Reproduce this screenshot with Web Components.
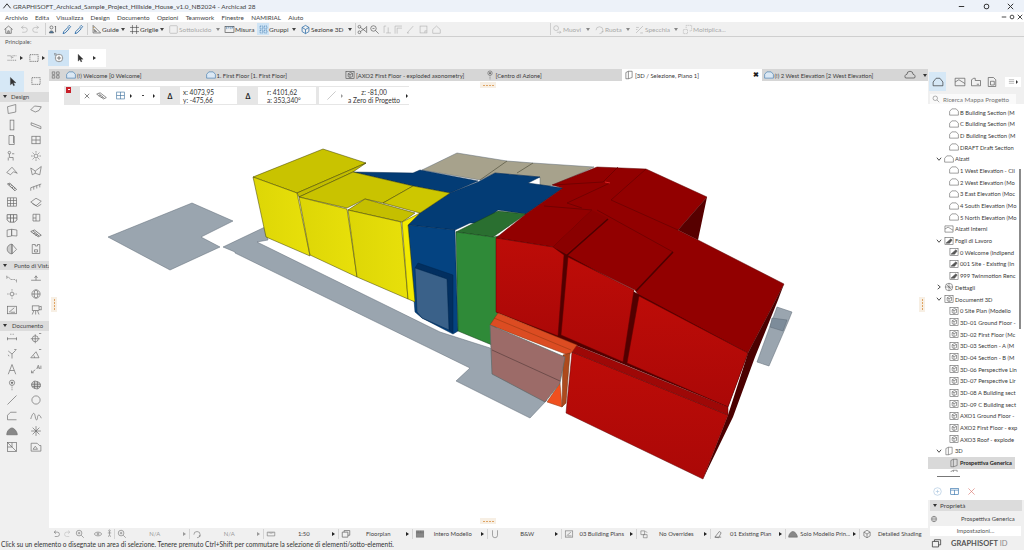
<!DOCTYPE html>
<html lang="it">
<head>
<meta charset="utf-8">
<title>Archicad 28</title>
<style>
  html, body { margin: 0; padding: 0; height: 100%; overflow: hidden; background: #f0f0f0; }
  body { font-family: Lato, "Liberation Sans", sans-serif; font-size: 6.6px; color: #333; }
</style>
</head>
<body>
<app-shell>
  <title-bar>GRAPHISOFT_Archicad_Sample_Project_Hillside_House_v1.0_NB2024 - Archicad 28</title-bar>
  <menu-bar>
    <span>Archivio</span><span>Edita</span><span>Visualizza</span><span>Design</span><span>Documento</span><span>Opzioni</span><span>Teamwork</span><span>Finestre</span><span>NAMIRIAL</span><span>Aiuto</span>
  </menu-bar>
  <main-toolbar>
    <tb-btn w="16" icon="home"></tb-btn><tb-btn w="14" icon="undo" off></tb-btn><tb-btn w="13" icon="redo" off></tb-btn><tb-sep></tb-sep>
    <tb-btn w="13" icon="people"></tb-btn><tb-btn w="13" icon="dropper" tint="#2b6ca8"></tb-btn><tb-btn w="11" icon="dropper" tint="#2b6ca8"></tb-btn><tb-sep w="6"></tb-sep>
    <tb-btn w="38" icon="guide" arrow>Guide</tb-btn><tb-btn w="39" icon="grid" arrow>Griglie</tb-btn><tb-btn w="56" icon="check" arrow off>Sottolucido</tb-btn><tb-btn w="34" icon="measure">Misura</tb-btn><tb-btn w="42" icon="groups" arrow on>Gruppi</tb-btn><tb-btn w="56" icon="section3d" arrow tint="#2b6ca8">Sezione 3D</tb-btn><tb-sep w="1"></tb-sep>
    <tb-btn w="12" icon="cut"></tb-btn><tb-btn w="13" icon="zoomtool"></tb-btn><tb-btn w="12" icon="trim" off></tb-btn><tb-btn w="11" icon="corner" off></tb-btn><tb-btn w="13" icon="pencil" off></tb-btn><tb-btn w="13" icon="square" off></tb-btn><tb-btn w="13" icon="house" off></tb-btn>
    <tb-gap w="107"></tb-gap><tb-sep w="1"></tb-sep>
    <tb-btn w="42" icon="move" arrow off>Muovi</tb-btn><tb-btn w="40" icon="rotate" arrow off>Ruota</tb-btn><tb-btn w="48" icon="mirror" arrow off>Specchia</tb-btn><tb-btn w="50" icon="multi" off>Moltiplica...</tb-btn>
  </main-toolbar>
  <sub-toolbar></sub-toolbar>
  <work-space>
    <tool-palette></tool-palette>
    <view-area></view-area>
    <status-bar>Click su un elemento o disegnate un area di selezione. Tenere premuto Ctrl+Shift per commutare la selezione di elementi/sotto-elementi.</status-bar>
    <nav-panel></nav-panel>
  </work-space>
</app-shell>

<script>
// icon strokes, drawn on a 16x16 box
const ICONS = {
  home: '<path d="M2 8 8 3l6 5M4 7v6.500h8V7M7 13.500V10h2v3.500"/>',
  undo: '<path d="M5 5H10a3.500 3.500 0 0 1 0 7H6M5 5l3-2.500M5 5l3 2.500"/>',
  redo: '<path d="M11 5H6a3.500 3.500 0 0 0 0 7h4M11 5 8 2.500M11 5 8 7.500"/>',
  people: '<circle cx="5" cy="5" r="2.200"/><path d="M2 13c0-4 6-4 6 0z" fill="#4a7fae"/><path d="M11 3v9M10 4l1-1" stroke="#333"/>',
  dropper: '<path d="M3 14l1-3 6-6 2 2-6 6zM10 4l2-2 2 2-2 2" stroke-width="1.300"/>',
  guide: '<path d="M3 2v11h11zM5 8v3h3z"/><path d="M3 5h2M3 8h1" stroke="#c58a2a"/>',
  grid: '<path d="M5 1.500v13M11 1.500v13M1.500 5h13M1.500 11h13" stroke="#444"/>',
  check: '<rect x="2.500" y="2.500" width="11" height="11" rx="1"/>',
  measure: '<rect x="1.500" y="3.500" width="13" height="9" stroke="#444"/><path d="M4 3.500v4M7 3.500v3M10 3.500v4M12.500 3.500v3" stroke="#2b6ca8"/>',
  groups: '<path d="M3 3h4v4H3zM9 3h4v4H9zM3 9h4v4H3zM9 9h4v4H9z" stroke="#2b6ca8" stroke-dasharray="1.500 1"/>',
  section3d: '<path d="M8 2l5 3v6l-5 3-5-3V5zM3 5l5 3 5-3M8 8v6" stroke-width="1.100"/>',
  cut: '<circle cx="3.500" cy="4" r="2"/><circle cx="3.500" cy="12" r="2"/><path d="M5 5l8 6M5 11l8-6M14 3v10" />',
  zoomtool: '<circle cx="6.500" cy="6.500" r="4"/><path d="M9.500 9.500 14 14M5 6.500h3"/>',
  trim: '<path d="M3 3v10M3 3h3M9 5v8M6 13h7"/>',
  corner: '<path d="M3 14V3h10M6 14V6h7"/>',
  pencil: '<path d="M3 13 12 3M3 13h3"/>',
  square: '<rect x="3" y="3" width="10" height="10"/><path d="M10 13v-3h3"/>',
  house: '<path d="M2.500 8 8 3l5.500 5v5.500h-11z"/>',
  move: '<circle cx="6" cy="6" r="3.500"/><path d="M7 12h6M11 10l2 2-2 2"/>',
  rotate: '<path d="M3 9a5 5 0 1 1 5 5M11 11h3"/>',
  mirror: '<path d="M3 13 13 3M3 5h4M3 8h2M9 13h4" />',
  multi: '<path d="M2 14V8h6v6zM6 6V2h8v8h-3" stroke-dasharray="2 1"/>',
  floorplan: '<path d="M2 5h5v3h2V5h5M2 11h12" stroke-dasharray="1.500 1"/>',
  marquee: '<rect x="2.500" y="3.500" width="11" height="9" stroke-dasharray="1.500 1" stroke="#444"/>',
  orbit: '<circle cx="8" cy="8" r="5" fill="#fff"/><path d="M5 8h6M8 5v6" stroke="#444"/><path d="M3 5l-1-3 3 1" />',
  pointer: '<path d="M5 2v11l2.700-2.600 1.800 3.800 1.600-.8-1.800-3.600H13z" fill="#333" stroke="#333" stroke-width=".5"/>',
  wall: '<path d="M2 5l11-3v10l-10 2z"/>',
  slab: '<path d="M1 9l5-5 9 1-3 5-5 2z"/>',
  column: '<rect x="5.500" y="1.500" width="5" height="13"/>',
  beam: '<path d="M1.500 5l13 5v3l-13-5z"/>',
  door: '<path d="M4 14V2h6l1 1v11zM10 2v10"/>',
  windowt: '<rect x="2.500" y="3" width="11" height="10"/><path d="M8 3v10M2.500 8h11"/>',
  chair: '<circle cx="4.500" cy="3.500" r="1.700"/><path d="M4.500 5v5h5v4M3 14v-4M8 5l3 0"/>',
  lamp: '<circle cx="8" cy="8" r="2.600"/><path d="M8 1.500v2M8 12.500v2M1.500 8h2M12.500 8h2M3.500 3.500l1.500 1.500M11 11l1.500 1.500M3.500 12.500 5 11M11 5l1.500-1.500"/>',
  roof: '<path d="M1 10 8 3l7 8-5-2-4 4z"/>',
  shell: '<path d="M1 4l6 4 8-6-2 11-6-2-4 2z"/><path d="M7 8v3"/>',
  stair: '<path d="M2 4l3-1 9 8-2 2zM4 5l1.500-1M6 7l1.500-1M8 9l1.500-1M10 11l1.500-1" stroke-width="1.200"/>',
  rail: '<path d="M1 9 15 4M1 13V9M5 11.500V7.600M9 10V6.200M13 8.500V4.800"/>',
  curtain: '<rect x="2" y="2.500" width="12" height="11"/><path d="M6 2.500v11M10 2.500v11M2 6h12M2 10h12"/>',
  morph: '<path d="M1 8l7-5 7 4-7 6zM3 10l7 4 5-3" />',
  gridbox: '<path d="M1.500 3.500h13v7l-3 3h-7l-3-3zM6 3.500v10M10 3.500v10M1.500 8h13" stroke-width="1.100"/>',
  box: '<path d="M4 3h9v9H4zM8 3v9M4 8h4" />',
  panel: '<path d="M1.500 4l6-1v9l-6 1zM7.500 3l7 1v8l-7-.5z"/>',
  mesh: '<path d="M1 6l5-2 9 7-4 2zM4 5l8 7M7 8l-3 1M10 10l-3 1" stroke-width="1.100"/>',
  sphere: '<path d="M8 1.500a6.500 6.500 0 0 0 0 13z" fill="#ccc"/><path d="M8 1.500l6 7-6 6"/><path d="M8 1.500v13"/>',
  planshape: '<path d="M3 2h4v2h3V2h3v12H3z"/><path d="M6 9h4v3H6z"/>',
  sectionline: '<path d="M1 7h3l2 3h6l2 2M1 5v4M14 10v4" stroke-dasharray="1.500 .8"/>',
  elevation: '<path d="M1.500 11h13M8 6v5M6 8l2-3 2 3"/>',
  interior: '<circle cx="8" cy="8" r="2.500"/><path d="M8 1.500v3M8 11.500v3M1.500 8h3M11.500 8h3" stroke-dasharray="1 .8"/>',
  globe: '<circle cx="8" cy="8" r="5.500"/><ellipse cx="8" cy="8" rx="2.500" ry="5.500"/><path d="M2.500 8h11"/>',
  sheet: '<rect x="2" y="3" width="12" height="10" fill="#eee"/><path d="M4 11l7-6M6 11h6"/>',
  camera: '<rect x="3" y="2.500" width="9" height="6"/><path d="M12 4l3-1v5l-3-1M5 9l-2 5M10 9l2 5M7.500 9v5"/>',
  dim: '<path d="M1.500 9h13M2 7v4M14 7v4"/><path d="M6 3h1M9 3h1" stroke-width="1.500"/>',
  radial: '<circle cx="7" cy="9" r="4"/><path d="M7 3v12M1 9h12M12 2h3"/>',
  angle: '<path d="M8 14V8L3 4M8 8l5-5M11 2h3M3 9l1 2"/>',
  slope: '<path d="M1 13h11L8 5zM6 13a4 4 0 0 0-1-3M12 2h3" />',
  letter: '<path d="M3 15 8 2l5 13M5 10h6"/>',
  label: '<path d="M2 13l5-4M2 13v-3M2 13h3"/><path d="M9 8l2-5 2 5M10 6.500h2M14.500 3.500V8" />',
  pin: '<circle cx="8" cy="5" r="3.500"/><circle cx="8" cy="5" r="1" fill="#333"/><path d="M8 8.500V15" stroke-dasharray="1.500 1"/>',
  fill: '<path d="M2 8c0-4 4-6 6-5s6 1 6 5-4 6-6 5-6-1-6-5z" fill="#ccc"/><path d="M2 7h12M3 10h11M6 3v10M10 3v10"/>',
  line: '<path d="M2 14 14 2"/>',
  circle: '<circle cx="8" cy="8" r="5.500"/>',
  poly: '<path d="M2 13V7l4-4h8M2 13h12"/>',
  spline: '<path d="M1 12c3-10 5-9 6-3s3 5 3 1 3-5 5 1"/>',
  hatch: '<path d="M1 13c0-5 4-9 7-9 3 0 7 5 7 9z" fill="#888"/>',
  sun: '<path d="M8 1.500v13M1.500 8h13M3.500 3.500l9 9M12.500 3.500l-9 9"/>',
  picture: '<rect x="2" y="2" width="12" height="12"/><path d="M2 2l6 6M8 8l6 6M8 2v6H2"/>',
  picture2: '<path d="M1.500 3h8l3 3h2v7.500h-13z"/><path d="M4 11l3-4 3 4z"/>',
  tabs: '<path d="M2 3h4v4H2zM9 3h4v4H9zM2 9h4v4H2zM9 9h4v4H9z"/>',
  elev: '<path d="M1 13V7l3.500-4h7L15 7v6z"/>',
  elevblue: '<path d="M1 13V7l3.500-4h7L15 7v6z" stroke="#2b6ca8" fill="#dbe8f4"/>',
  worksheet: '<rect x="1.500" y="2.500" width="13" height="11"/><path d="M3 11.500l8-7 2 2-4 5z" fill="#555"/>',
  doc3d: '<rect x="1.500" y="2.500" width="13" height="11"/><path d="M5 6l4-2 3 1.500v5L8 12l-3-1.500zM5 6l3 1.500 4-2M8 7.500V12"/>',
  detail: '<circle cx="8" cy="8" r="6"/><path d="M2 8h12M8 2v12M4 4l8 8"/>',
  folder3d: '<path d="M3 4l4-2h6v10l-6 2H3zM7 2v12"/>',
  navmap: '<path d="M1.500 13V8l4-5h5l4 5v5z"/>',
  navview: '<path d="M1.500 3h13v10h-13zM1.500 8l5-3 8 5"/>',
  navlayout: '<path d="M2 13V5l3-2h2v3h7v7zM9 11h3" />',
  navpub: '<path d="M3 2h7l3 3v9H3zM6 7h5v5H6z"/>',
  menu: '<path d="M2 4h12M2 8h12M2 12h12"/>',
  search: '<circle cx="6.500" cy="6.500" r="4.500"/><path d="M10 10l4.500 4.500"/>',
  plus: '<circle cx="8" cy="8" r="5.500" stroke="#a9c4de"/><path d="M8 5.500v5M5.500 8h5" stroke="#a9c4de"/>',
  blueview: '<rect x="2.500" y="3.500" width="11" height="9" stroke="#2b6ca8"/><path d="M2.500 6h11M8 6v6.500" stroke="#2b6ca8"/>',
  redx: '<path d="M3.500 3.500l9 9M12.500 3.500l-9 9" stroke="#d9736b"/>',
  cross: '<path d="M3.500 3.500l9 9M12.500 3.500l-9 9" stroke="#555" stroke-width="1.400"/>',
  layers: '<path d="M2 5h9v8H2zM5 5V2.500h9V10h-3" stroke-width="1.200"/>',
  pencilscale: '<path d="M2 5h12v6H2zM5 5v2M8 5v3M11 5v2"/>',
  zoomfit: '<circle cx="6.500" cy="6.500" r="4.500"/><path d="M10 10l4 4M4.500 6.500h4M6.500 4.500v4"/>',
  ear: '<path d="M2 8c2-4 10-4 12 0-2 4-10 4-12 0z"/><circle cx="8" cy="8" r="1.500"/>',
  walk: '<circle cx="8" cy="3" r="1.400"/><path d="M8 5v5l-2 4M8 10l2 4M5 7h6"/>',
  penset: '<path d="M3 13l7-9 3 2-4 8zM3 13h10" stroke-width="1.100"/>',
  hatchbox: '<rect x="2" y="3" width="12" height="10" fill="#888"/><path d="M2 6h12M5 3v3M9 3v3"/>',
  horseshoe: '<path d="M4 2v8a4 4 0 0 0 8 0V2"/>',
  overrides: '<path d="M3 3h6v6H3zM7 9h6v5H7zM10 3l3 3" />',
  cloud: '<path d="M2 12a3 3 0 0 1 2-5 4 4 0 0 1 8 0 3 3 0 0 1 2 5z"/>'
};

// small base class: open shadow root, render once on connect
class Part extends HTMLElement {
  constructor() {
    super();
    this.shadowDOM = this.attachShadow({mode: "open"});
  }
  connectedCallback() {
    this.render();
  }
}

class AcIcon extends Part {
  render() {
    const size = this.getAttribute("size") || 11;
    const path = ICONS[this.getAttribute("name")] || "";
    this.shadowDOM.innerHTML = `
      <style>
        :host { display: inline-flex; flex: none; width: ${size}px; height: ${size}px; color: var(--icon, #6a6a6a); }
        svg { width: 100%; height: 100%; fill: none; stroke: currentColor; stroke-width: .9; display: block; overflow: visible; }
      </style>
      <svg viewBox="0 0 16 16">${path}</svg>`;
  }
}
customElements.define("ac-icon", AcIcon);

class AppShell extends Part {
  render() {
    this.shadowDOM.innerHTML = `
      <style>
        :host { display: flex; flex-direction: column; width: 1024px; height: 550px; overflow: hidden; }
      </style>
      <slot></slot>`;
  }
}
customElements.define("app-shell", AppShell);

class TitleBar extends Part {
  render() {
    this.shadowDOM.innerHTML = `
      <style>
        :host { display: flex; flex: none; align-items: center; height: 12px; background: #edf2f9; color: #444; font-size: 6.500px; padding-left: 2px; }
        .logo { width: 10px; color: #555; }
        .ctl { margin-left: auto; display: flex; }
        .slot { white-space: nowrap; }
        svg { width: 9px; height: 9px; fill: none; stroke: #333; stroke-width: 1.100; display: block; }
        .btn { width: 24.500px; display: flex; justify-content: center; }
      </style>
      <svg class="logo" viewBox="0 0 10 10" style="margin-right:1px"><path d="M1 7 5 2l4 5"/></svg>
      <span class="slot"><slot></slot></span>
      <span class="ctl" style="padding-right:1px">
        <span class="btn"><svg viewBox="0 0 10 10"><path d="M2 5h6"/></svg></span>
        <span class="btn"><svg viewBox="0 0 10 10"><rect x="2.500" y="2.500" width="5" height="5" rx="2"/></svg></span>
        <span class="btn"><svg viewBox="0 0 10 10"><path d="M2 2l6 6M8 2l-6 6"/></svg></span>
      </span>`;
  }
}
customElements.define("title-bar", TitleBar);

class MenuBar extends Part {
  render() {
    this.shadowDOM.innerHTML = `
      <style>
        :host { display: flex; flex: none; align-items: center; height: 10px; background: #fff; color: #444; font-size: 6.300px; padding-left: 5px; position: relative; }
        ::slotted(span) { margin-right: 7.300px; }
        .ctl { position: absolute; right: 1px; top: 2px; display: flex; gap: 2px; }
        svg { width: 6px; height: 6px; fill: none; stroke: #444; stroke-width: 1.300; }
      </style>
      <slot></slot>
      <span class="ctl">
        <svg viewBox="0 0 8 8"><path d="M1 4h6"/></svg>
        <svg viewBox="0 0 8 8"><circle cx="4" cy="4" r="2.500"/></svg>
        <svg viewBox="0 0 8 8"><path d="M1 1l6 6M7 1 1 7"/></svg>
      </span>`;
  }
}
customElements.define("menu-bar", MenuBar);

class MainToolbar extends Part {
  render() {
    this.shadowDOM.innerHTML = `
      <style>
        :host { display: flex; flex: none; align-items: center; height: 15px; box-sizing: border-box; background: #f0f0f0; border-bottom: 1px solid #cfcfcf; }
      </style>
      <slot></slot>`;
  }
}
customElements.define("main-toolbar", MainToolbar);

class TbBtn extends Part {
  render() {
    const w = this.getAttribute("w");
    const off = this.hasAttribute("off");
    const on = this.hasAttribute("on");
    const tint = this.getAttribute("tint");
    const hasText = this.textContent.trim().length > 0;
    this.shadowDOM.innerHTML = `
      <style>
        :host { display: flex; flex: none; align-items: center; width: ${w}px; height: 13px; white-space: nowrap; justify-content: ${hasText ? "flex-start" : "center"};
                color: ${off ? "#a8a8a8" : "#3c3c3c"}; font-size: 6.500px; --icon: ${tint || (off ? "#b0b0b0" : "#4a4a4a")}; }
        .i { display: inline-flex; padding: .5px; ${on ? "background: #cfe4f5;" : ""} }
        .a { width: 0; height: 0; margin-left: auto; margin-right: 3px; border-left: 2px solid transparent; border-right: 2px solid transparent; border-top: 3px solid ${off ? "#888" : "#444"}; }
      </style>
      <span class="i"><ac-icon name="${this.getAttribute("icon")}"></ac-icon></span>
      <slot></slot>
      ${this.hasAttribute("arrow") ? '<span class="a"></span>' : ""}`;
  }
}
customElements.define("tb-btn", TbBtn);

class TbSep extends Part {
  render() {
    const w = this.getAttribute("w") || 4;
    this.shadowDOM.innerHTML = `
      <style>
        :host { display: flex; flex: none; justify-content: center; width: ${w}px; height: 12px; }
        i { width: 1px; background: #cfcfcf; }
      </style><i></i>`;
  }
}
customElements.define("tb-sep", TbSep);

class TbGap extends Part {
  render() {
    this.shadowDOM.innerHTML = `<style>:host { display: block; flex: none; width: ${this.getAttribute("w")}px; }</style>`;
  }
}
customElements.define("tb-gap", TbGap);

class SubToolbar extends Part {
  render() {
    this.shadowDOM.innerHTML = `
      <style>
        :host { display: flex; flex: none; flex-direction: column; height: 32px; box-sizing: border-box; background: #f0f0f0; padding: 1px 0 0 5px; }
        .lbl { font-size: 5.800px; color: #555; height: 11px; line-height: 7px; }
        .row { display: flex; align-items: center; height: 18px; margin-left: -2px; }
        .i { display: flex; align-items: center; justify-content: center; height: 16px; }
        .a { width: 0; height: 0; border-top: 2px solid transparent; border-bottom: 2px solid transparent; border-left: 3px solid #333; }
        .hot { width: 21px; background: #cfe4f5; margin-left: 3px; }
        .white { width: 37px; background: #fff; height: 18px; gap: 8px; justify-content: flex-start; padding-left: 6px; box-sizing: border-box; }
      </style>
      <span class="lbl">Principale:</span>
      <div class="row">
        <span class="i" style="width:17px"><ac-icon name="floorplan" size="12"></ac-icon></span><span class="a"></span>
        <span class="i" style="width:17px;margin-left:2px"><ac-icon name="marquee" size="12"></ac-icon></span><span class="a"></span>
        <span class="i hot"><ac-icon name="orbit" size="12"></ac-icon></span>
        <span class="i white"><ac-icon name="pointer" size="10"></ac-icon><span class="a"></span></span>
      </div>`;
  }
}
customElements.define("sub-toolbar", SubToolbar);

class WorkSpace extends Part {
  render() {
    this.shadowDOM.innerHTML = `
      <style>
        :host { display: grid; flex: 1; min-height: 0; grid-template-columns: 49px 879px 96px; grid-template-rows: 459px 22px; }
        ::slotted(status-bar) { grid-column: 1 / 3; }
        ::slotted(nav-panel) { grid-column: 3; grid-row: 1 / 3; }
      </style>
      <slot></slot>`;
  }
}
customElements.define("work-space", WorkSpace);

class PaletteHead extends Part {
  render() {
    const pad = this.getAttribute("pad") || 3;
    this.shadowDOM.innerHTML = `
      <style>
        :host { display: flex; align-items: center; height: 9.500px; background: #dcdcdc; color: #444; font-size: 6px; padding-left: 3px; white-space: nowrap; }
        i { flex: none; width: 0; height: 0; margin-right: ${pad}px; border-left: 2px solid transparent; border-right: 2px solid transparent; border-top: 3px solid #333; }
      </style><i></i><slot></slot>`;
  }
}
customElements.define("palette-head", PaletteHead);

class ToolGrid extends Part {
  render() {
    const names = this.getAttribute("icons").split(" ");
    const rh = this.getAttribute("rh") || 15.5;
    this.shadowDOM.innerHTML = `
      <style>
        :host { display: grid; grid-template-columns: 24px 23px; grid-auto-rows: ${rh}px; justify-items: center; align-items: center; }
      </style>
      ${names.map(n => `<ac-icon name="${n}" size="12"></ac-icon>`).join("")}`;
  }
}
customElements.define("tool-grid", ToolGrid);

class ToolPalette extends Part {
  render() {
    this.shadowDOM.innerHTML = `
      <style>
        :host { display: flex; flex-direction: column; background: #f0f0f0; padding-top: 2px; }
        .sel { display: grid; grid-template-columns: 24px 23px; height: 20.500px; margin-bottom: .5px; }
        .sel span { display: flex; align-items: center; justify-content: center; }
        .sel .on { background: #d6e8f6; }
      </style>
      <div class="sel">
        <span class="on"><ac-icon name="pointer" size="11"></ac-icon></span>
        <span><ac-icon name="marquee" size="12"></ac-icon></span>
      </div>
      <palette-head pad="4">Design</palette-head>
      <tool-grid icons="wall slab column beam door windowt chair lamp roof shell stair rail curtain morph gridbox box panel mesh sphere planshape"></tool-grid>
      <palette-head style="margin-top:4px" pad="7">Punto di Vista</palette-head>
      <tool-grid rh="16" icons="sectionline elevation interior globe sheet camera"></tool-grid>
      <palette-head style="margin-top:3px" pad="5">Documento</palette-head>
      <tool-grid icons="dim radial angle slope letter label pin fill line circle poly spline hatch sun picture picture2"></tool-grid>`;
  }
}
customElements.define("tool-palette", ToolPalette);

class ViewTab extends Part {
  render() {
    const active = this.hasAttribute("active");
    this.shadowDOM.innerHTML = `
      <style>
        :host { display: flex; align-items: center; gap: 1px; flex: none; width: 139.500px; box-sizing: border-box; padding-left: 2px; height: 12px; font-size: 5.900px; white-space: nowrap; color: #3a3a3a; background: ${active ? "#fff" : "transparent"}; --icon: #4a7fae; }
        .x { margin-left: auto; margin-right: 3px; font-weight: 700; font-size: 6.500px; color: #222; }
      </style>
      <ac-icon name="${this.getAttribute("icon")}" size="10"></ac-icon>
      <slot></slot>
      ${active ? '<span class="x">✖</span>' : ""}`;
  }
}
customElements.define("view-tab", ViewTab);

class GripMark extends Part {
  render() {
    const v = this.hasAttribute("vertical");
    this.shadowDOM.innerHTML = `
      <style>
        :host { position: absolute; display: flex; flex-direction: ${v ? "column" : "row"}; gap: 1px; align-items: center; justify-content: center; background: #f7efe4; ${v ? "width:6px;height:15px;" : "width:16px;height:6px;"} }
        i { background: #e0a565; ${v ? "width:1px;height:2px;" : "width:2px;height:1px;"} }
      </style><i></i><i></i><i></i><i></i>`;
  }
}
customElements.define("grip-mark", GripMark);

class InfoBox extends Part {
  render() {
    this.shadowDOM.innerHTML = `
      <style>
        :host { position: absolute; left: 15px; top: 5px; display: flex; gap: 1px; align-items: center; width: 345px; height: 19px; background: #e6e6e6; font-size: 6.600px; color: #333; box-sizing: border-box; padding-left: 16px; white-space: nowrap; }
        .red { position: absolute; left: 2px; top: 1px; width: 5px; height: 6px; background: #c8202a; }
        .red:after { content: ""; position: absolute; left: 1.500px; top: 2px; width: 2px; height: 1px; background: #fff; }
        .cell { display: flex; align-items: center; background: #fff; height: 17px; box-sizing: border-box; }
        .tri { width: 20px; display: flex; justify-content: center; font-size: 7px; font-weight: 700; color: #222; flex: none; }
        .two { display: flex; flex-direction: column; line-height: 8px; }
        .a { width: 0; height: 0; border-top: 2px solid transparent; border-bottom: 2px solid transparent; border-left: 2.500px solid #222; }
      </style>
      <span class="red"></span>
      <div class="cell" style="width:80px;padding-left:3px;gap:0">
        <ac-icon name="cross" size="8" style="margin-right:5px"></ac-icon>
        <ac-icon name="mesh" size="11" style="margin-right:8px"></ac-icon>
        <ac-icon name="windowt" size="11" style="--icon:#3a6f9c;margin-right:4px"></ac-icon>
        <span class="a" style="margin-right:10px"></span>
        <span style="width:2px;height:1px;background:#444;margin-right:9px"></span>
        <span class="a"></span>
      </div>
      <span class="tri" style="margin-left:-1px">Δ</span>
      <div class="cell two" style="width:57px;padding-left:3px;margin-left:-1px;align-items:flex-start;justify-content:center">
        <span>x: 4073,95</span><span>y: -475,66</span>
      </div>
      <span class="tri">Δ</span>
      <div class="cell two" style="width:58px;padding-left:9px;margin-left:-1px;align-items:flex-start;justify-content:center">
        <span>r: 4101,62</span><span>a: 353,340°</span>
      </div>
      <div class="cell" style="width:90px;margin-left:2px;padding-left:7px">
        <ac-icon name="line" size="11" style="--icon:#aaa"></ac-icon>
        <span class="a" style="margin-left:4px;border-left-color:#999"></span>
        <span class="two" style="margin-left:6px;width:50px;align-items:center">
          <span>z: -81,00</span><span>a Zero di Progetto</span>
        </span>
        <span class="a" style="margin-left:7px"></span>
      </div>`;
  }
}
customElements.define("info-box", InfoBox);

class ScenePlan extends Part {
  render() {
    // coordinates are page pixels: the viewBox starts where the canvas starts
    this.shadowDOM.innerHTML = `
      <style>
        :host { display: block; width: 879px; height: 447px; background: #fff; }
        svg { display: block; }
        .e { stroke: #3d3d00; stroke-width: .5; stroke-linejoin: round; }
        .r { stroke: #5e0000; stroke-width: .5; stroke-linejoin: round; }
        .b { stroke: #01264e; stroke-width: .5; stroke-linejoin: round; }
        .g { stroke: #5f6b76; stroke-width: .5; stroke-linejoin: round; }
      </style>
      <svg width="879" height="447" viewBox="49 81 879 447">
        <defs>
          <linearGradient id="yf" x1="0" y1="0" x2="1" y2="0"><stop offset="0" stop-color="#ddd606"/><stop offset="1" stop-color="#e8e00a"/></linearGradient>
          <linearGradient id="rf" x1="0" y1="0" x2="0" y2="1"><stop offset="0" stop-color="#bd0c08"/><stop offset="1" stop-color="#ab0807"/></linearGradient>
        </defs>
        <!-- ground slabs -->
        <g class="g" fill="#9aa5af">
          <polygon points="108,237 192,203 233,221 201,237 220,247 170,270"/>
          <polygon points="223,247 265,227 268,240 257,242 440,332 490,348 547,400 530,418 456,381 470,368 235,253 235,252"/>
          <polygon points="777,307 792,312 788,322 769,366 757,362"/>
          <polygon points="772,318 787,320 783,331 770,327" fill="#7d8c9a"/>
        </g>
        <!-- beige back roofs -->
        <polygon class="g" fill="#a7a28c" points="422,170 457,153 507,161 533,163 594,167 572,177 550,186 540,185 540,177 495,173 480,180"/>
        <path d="M507,161 480,180M533,163 517,173" stroke="#55533f" stroke-width=".7"/>
        <!-- blue -->
        <polygon class="b" fill="#033c75" points="353,172 413,173 420,170 478,181 450,193 413,186"/>
        <polygon class="b" fill="#033c75" points="408,225 420,213 450,193 478,182 495,173 540,177 528,183 563,188 526,214 498,210 483,223 470,223 455,230"/>
        <polygon class="b" fill="#044381" points="408,225 455,230 458,331 453,334 422,318 415,312"/>
        <!-- yellow -->
        <polygon class="e" fill="#c9c300" points="253,177 323,149 366,163 297,193"/>
        <polygon class="e" fill="#c3bd00" points="297,193 366,163 353,172 299,197"/>
        <polygon class="e" fill="#c9c300" points="299,197 353,172 413,186 383,203 365,199 347,208"/>
        <polygon class="e" fill="#cdc700" points="383,203 413,186 450,193 420,213"/>
        <polygon class="e" fill="#c5bf00" points="348,210 365,199 415,213 402,222"/>
        <polygon class="e" fill="url(#yf)" points="253,177 297,193 310,256 266,237"/>
        <polygon class="e" fill="url(#yf)" points="299,197 347,209 357,277 310,255"/>
        <polygon class="e" fill="url(#yf)" points="348,210 401,222 408,299 357,277"/>
        <polygon class="e" fill="#f2ea00" points="402,222 420,213 408,225 415,302 408,299"/>
        <!-- blue block window -->
        <polygon class="b" fill="#022f60" points="418,263 453,275 453,333 449,330 447,279 415,268"/>
        <polygon class="b" fill="#3a6189" points="415,268 447,279 449,330 422,318 417,312"/>
        <!-- green -->
        <polygon fill="#2a6f30" stroke="#123a16" stroke-width=".5" points="456,232 498,211 526,214 493,237"/>
        <polygon fill="#2f8a38" stroke="#123a16" stroke-width=".5" points="456,232 493,237 499,236 499,316 492,345 458,331"/>
        <!-- red roofs -->
        <polygon class="r" fill="#920000" points="496,238 526,214 563,188 552,185 577,175 597,167 646,169 707,197 678,230 698,240 784,284 748,353 639,296 635,290 568,257 564,255 553,247"/>
        <polygon fill="#570000" points="707,197 698,240 678,230"/>
        <path d="M611,200 678,230M611,200 646,169M597,210 673,252M567,203 610,183M553,185 603,182M567,203 582,208M544,206 592,210M553,247 592,210M618,167 603,182" stroke="#650000" stroke-width=".7" fill="none"/>
        <path d="M605,182 610,183" stroke="#d22" stroke-width="1"/>
        <polygon fill="#8a0000" points="553,247 592,210 608,218 564,255"/>
        <!-- red fronts, dark backing shows through the grooves -->
        <polygon fill="#520000" points="496,238 553,247 640,295 748,353 728,407 623,364 558,338 496,312"/>
        <polygon class="r" fill="url(#rf)" points="496,238 553,247 564,255 558,336 496,312"/>
        <polygon class="r" fill="url(#rf)" points="568,257 634,290 623,362 561,335"/>
        <polygon class="r" fill="url(#rf)" points="639,296 748,353 728,407 627,363"/>
        <polygon fill="#4b0000" points="784,284 778,300 755,357 733,417 703,479 728,415 748,353"/>
        <path d="M566,256 608,219M636,291 673,252" stroke="#4e0000" stroke-width="1.600" fill="none"/>
        <polygon class="r" fill="url(#rf)" points="572,352 728,415 703,479 566,413"/>
        <polygon class="r" fill="#9e0807" points="575,345 728,407 728,415 572,352"/>
        <!-- orange entry -->
        <polygon fill="#dc4c22" stroke="#8a3510" stroke-width=".5" points="498,313 577,345 572,352 568,355 490,325"/>
        <path d="M494,318 571,350" stroke="#8a3510" stroke-width=".5"/>
        <polygon fill="#f0501f" stroke="#8a3510" stroke-width=".5" points="560,383 547,402 562,407"/>
        <polygon fill="#ad4a1d" stroke="#6e2c0e" stroke-width=".5" points="563,355 570,353 566,403 562,407"/>
        <polygon fill="#9c6b68" stroke="#5c6a6a" stroke-width=".7" points="490,325 565,357 560,383 545,402 492,374"/>
        <path d="M492,350 560,381" stroke="#5a3f3d" stroke-width=".7"/>
      </svg>`;
  }
}
customElements.define("scene-plan", ScenePlan);

class ViewArea extends Part {
  render() {
    this.shadowDOM.innerHTML = `
      <style>
        :host { display: flex; flex-direction: column; position: relative; background: #fff; }
        .tabs { display: flex; align-items: center; flex: none; height: 12px; background: #d6d6d6; font-size: 6.300px; }
        .grid { flex: none; width: 13px; display: flex; justify-content: center; --icon: #555; margin-left: 0; margin-right: 2px; }
        .more { display: flex; align-items: center; padding-left: 3px; gap: 7px; }
        .a { width: 0; height: 0; border-left: 2px solid transparent; border-right: 2px solid transparent; border-top: 3px solid #333; }
        .g1 { left: 431px; top: 13px; }
        .g2 { left: 431px; top: 449px; }
        .g3 { left: 2px; top: 228px; }
        .g4 { left: 870px; top: 228px; }
      </style>
      <div class="tabs">
        <span class="grid"><ac-icon name="tabs" size="10"></ac-icon></span>
        <view-tab icon="elevblue">(!) Welcome [0 Welcome]</view-tab>
        <view-tab icon="elevblue">1. First Floor [1. First Floor]</view-tab>
        <view-tab icon="doc3d" style="--icon:#444">[AXO2 First Floor - exploded axonometry]</view-tab>
        <view-tab icon="pin" style="--icon:#555">[Centro di Azione]</view-tab>
        <view-tab icon="folder3d" active style="--icon:#444">[3D / Selezione, Piano 1]</view-tab>
        <view-tab icon="elevblue">(!) 2 West Elevation [2 West Elevation]</view-tab>
        <span class="more"><ac-icon name="cloud" size="12" style="--icon:#444"></ac-icon><span class="a"></span></span>
      </div>
      <scene-plan></scene-plan>
      <info-box style="top:17px"></info-box>
      <grip-mark class="g1"></grip-mark>
      <grip-mark class="g2"></grip-mark>
      <grip-mark class="g3" vertical></grip-mark>
      <grip-mark class="g4" vertical></grip-mark>`;
  }
}
customElements.define("view-area", ViewArea);

class StatusSeg extends Part {
  render() {
    const icon = this.getAttribute("icon");
    const off = this.hasAttribute("off");
    this.shadowDOM.innerHTML = `
      <style>
        :host { display: flex; flex: none; align-items: center; width: 74.500px; height: 10px; box-sizing: border-box; border-left: 1px solid #d4d4d4; padding-left: 2px; white-space: nowrap; color: ${off ? "#999" : "#444"}; font-size: 5.900px; }
        .t { flex: 1; text-align: center; }
        .a { flex: none; width: 0; height: 0; border-top: 2px solid transparent; border-bottom: 2px solid transparent; border-left: 3px solid ${off ? "#999" : "#222"}; margin-right: 3px; }
      </style>
      ${icon ? `<ac-icon name="${icon}" size="10"></ac-icon>` : ""}
      <span class="t"><slot></slot></span>
      <span class="a"></span>`;
  }
}
customElements.define("status-seg", StatusSeg);

class StatusBar extends Part {
  render() {
    this.shadowDOM.innerHTML = `
      <style>
        :host { display: flex; flex-direction: column; background: #f0f0f0; }
        .row { display: flex; align-items: center; height: 11px; padding-left: 49px; }
        .nav { display: flex; align-items: center; width: 65px; flex: none; padding-left: 2px; box-sizing: border-box; gap: 2px; }
        .msg { height: 11px; line-height: 11px; padding-left: 1px; font-size: 6.600px; color: #333; white-space: nowrap; }
      </style>
      <div class="row">
        <div class="nav">
          <ac-icon name="undo" size="10"></ac-icon><ac-icon name="redo" size="10" style="--icon:#bbb"></ac-icon><ac-icon name="zoomfit" size="10"></ac-icon><span style="width:4px"></span>
          <ac-icon name="ear" size="10"></ac-icon><ac-icon name="walk" size="9"></ac-icon>
        </div>
        <status-seg icon="zoomfit" off>N/A</status-seg>
        <status-seg icon="rotate" off>N/A</status-seg>
        <status-seg icon="pencilscale">1:50</status-seg>
        <status-seg icon="layers">Floorplan</status-seg>
        <status-seg icon="hatchbox">Intero Modello</status-seg>
        <status-seg icon="horseshoe">B&amp;W</status-seg>
        <status-seg icon="sheet">03 Building Plans</status-seg>
        <status-seg icon="overrides">No Overrides</status-seg>
        <status-seg icon="penset">01 Existing Plan</status-seg>
        <status-seg icon="hatch">Solo Modello Prin...</status-seg>
        <status-seg icon="section3d">Detailed Shading</status-seg>
      </div>
      <div class="msg"><slot></slot></div>`;
  }
}
customElements.define("status-bar", StatusBar);

class TreeRow extends Part {
  render() {
    const level = +(this.getAttribute("level") || 0);
    const open = this.getAttribute("open");
    const selected = this.hasAttribute("selected");
    const chev = open === "y"
      ? '<path d="M1 2l2.500 3L6 2"/>'
      : open === "n" ? '<path d="M2 1l3 2.500L2 6"/>' : "";
    this.shadowDOM.innerHTML = `
      <style>
        :host { display: flex; flex: none; align-items: center; height: 11.700px; width: 87px; box-sizing: border-box; white-space: nowrap;
                padding-left: ${level ? 21 : 8}px; font-size: 5.800px; color: #3a3a3a; ${selected ? "background: #d9d9d9; font-weight: 700; color: #222; font-size: 5.600px;" : ""} }
        svg { flex: none; width: 6px; height: 6px; margin-right: 2px; fill: none; stroke: #333; stroke-width: 1; }
        ac-icon { margin-right: 1px; --icon: #555; }
      </style>
      ${level ? "" : `<svg viewBox="0 0 7 7">${chev}</svg>`}
      <ac-icon name="${this.getAttribute("icon")}" size="10"></ac-icon>
      <slot></slot>`;
  }
}
customElements.define("tree-row", TreeRow);

class NavPanel extends Part {
  render() {
    this.shadowDOM.innerHTML = `
      <style>
        :host { display: flex; flex-direction: column; background: #f0f0f0; overflow: hidden; --icon: #555; }
        .tabs { display: flex; align-items: center; flex: none; height: 24px; padding-top: 1px; box-sizing: border-box; }
        .tabs span { display: flex; align-items: center; justify-content: center; }
        .hot { width: 17px; height: 19px; background: #d6e8f6; margin-left: 1px; margin-right: 6px; }
        .t { width: 16px; }
        .menu { width: 16px; height: 10px; background: #fff; margin-left: 5px; gap: 1px; }
        .a { width: 0; height: 0; border-top: 2px solid transparent; border-bottom: 2px solid transparent; border-left: 2.500px solid #333; }
        .search { display: flex; align-items: center; flex: none; margin: 1px 8px 0 2px; height: 10px; gap: 3px; background: #fafafa; padding-left: 2px; font-size: 6.300px; color: #777; white-space: nowrap; }
        .tree { position: relative; flex: none; display: flex; flex-direction: column; height: 368px; background: #fff; padding-top: 2.200px; box-sizing: border-box; overflow: hidden; }
        .bar { position: absolute; left: 91px; top: 65px; width: 1.500px; height: 160px; background: #8b8b8b; }
        .handle { flex: none; height: 10px; background: #fff; display: flex; justify-content: flex-start; }
        .handle i { margin: 4px 0 0 9px; width: 23px; height: 1px; background: #777; }
        .acts { display: flex; align-items: center; flex: none; height: 18px; padding-left: 4px; gap: 6px; background: #fff; }
        .head { display: flex; align-items: center; flex: none; height: 11px; margin: 0 2px; padding-left: 3px; gap: 3px; background: #dcdcdc; font-size: 6.300px; color: #444; }
        .head i { width: 0; height: 0; border-left: 2px solid transparent; border-right: 2px solid transparent; border-top: 3px solid #333; }
        .prop { display: flex; align-items: center; flex: none; height: 15px; padding-left: 2px; font-size: 5.900px; color: #444; white-space: nowrap; }
        .prop span { margin-left: 23px; }
        .set { flex: none; height: 10px; margin: 0 3px 0 2px; background: #fff; text-align: center; line-height: 10px; font-size: 6px; color: #555; }
        .brand { display: flex; align-items: center; flex: 1; padding-left: 3px; gap: 9px; font-size: 7.500px; font-weight: 700; color: #555; white-space: nowrap; }
        .brand em { font-style: normal; font-weight: 400; color: #888; }
      </style>
      <div class="tabs">
        <span class="hot"><ac-icon name="navmap" size="12" style="--icon:#333"></ac-icon></span>
        <span class="t"><ac-icon name="navview" size="12"></ac-icon></span>
        <span class="t"><ac-icon name="navlayout" size="12"></ac-icon></span>
        <span class="t"><ac-icon name="navpub" size="12"></ac-icon></span>
        <span class="menu"><ac-icon name="menu" size="7"></ac-icon><span class="a"></span></span>
      </div>
      <div class="search"><ac-icon name="search" size="8"></ac-icon>Ricerca Mappa Progetto</div>
      <div class="tree">
        <tree-row level="1" icon="elev">B Building Section (M</tree-row>
        <tree-row level="1" icon="elev">C Building Section (M</tree-row>
        <tree-row level="1" icon="elev">D Building Section (M</tree-row>
        <tree-row level="1" icon="elev">DRAFT Draft Section</tree-row>
        <tree-row open="y" icon="elev">Alzati</tree-row>
        <tree-row level="1" icon="elev">1 West Elevation - Cli</tree-row>
        <tree-row level="1" icon="elev">2 West Elevation (Mo</tree-row>
        <tree-row level="1" icon="elev">3 East Elevation (Moc</tree-row>
        <tree-row level="1" icon="elev">4 South Elevation (Mo</tree-row>
        <tree-row level="1" icon="elev">5 North Elevation (Mo</tree-row>
        <tree-row icon="navview">Alzati Interni</tree-row>
        <tree-row open="y" icon="worksheet">Fogli di Lavoro</tree-row>
        <tree-row level="1" icon="worksheet">0 Welcome (Indipend</tree-row>
        <tree-row level="1" icon="worksheet">001 Site - Existing (In</tree-row>
        <tree-row level="1" icon="worksheet">999 Twinmotion Renc</tree-row>
        <tree-row open="n" icon="detail">Dettagli</tree-row>
        <tree-row open="y" icon="doc3d">Documenti 3D</tree-row>
        <tree-row level="1" icon="doc3d">0 Site Plan (Modello</tree-row>
        <tree-row level="1" icon="doc3d">3D-01 Ground Floor -</tree-row>
        <tree-row level="1" icon="doc3d">3D-02 First Floor (Mc</tree-row>
        <tree-row level="1" icon="doc3d">3D-03 Section - A (M</tree-row>
        <tree-row level="1" icon="doc3d">3D-04 Section - B (M</tree-row>
        <tree-row level="1" icon="doc3d">3D-06 Perspective Lin</tree-row>
        <tree-row level="1" icon="doc3d">3D-07 Perspective Lir</tree-row>
        <tree-row level="1" icon="doc3d">3D-08 A Building sect</tree-row>
        <tree-row level="1" icon="doc3d">3D-09 C Building sect</tree-row>
        <tree-row level="1" icon="doc3d">AXO1 Ground Floor -</tree-row>
        <tree-row level="1" icon="doc3d">AXO2 First Floor - exp</tree-row>
        <tree-row level="1" icon="doc3d">AXO3 Roof - explode</tree-row>
        <tree-row open="y" icon="folder3d">3D</tree-row>
        <tree-row level="1" icon="folder3d" selected>Prospettiva Generica</tree-row>
        <tree-row level="1" icon="folder3d"></tree-row>
        <span class="bar"></span>
      </div>
      <div class="handle"><i></i></div>
      <div class="acts">
        <ac-icon name="plus" size="11"></ac-icon>
        <ac-icon name="blueview" size="11" style="--icon:#2b6ca8"></ac-icon>
        <ac-icon name="redx" size="11"></ac-icon>
      </div>
      <div class="head"><i></i>Proprietà</div>
      <div class="prop"><ac-icon name="globe" size="8"></ac-icon><span>Prospettiva Generica</span></div>
      <div class="set">Impostazioni...</div>
      <div class="brand"><ac-icon name="layers" size="11" style="--icon:#444"></ac-icon><span>GRAPHISOFT <em>ID</em></span></div>`;
  }
}
customElements.define("nav-panel", NavPanel);
</script>
</body>
</html>
